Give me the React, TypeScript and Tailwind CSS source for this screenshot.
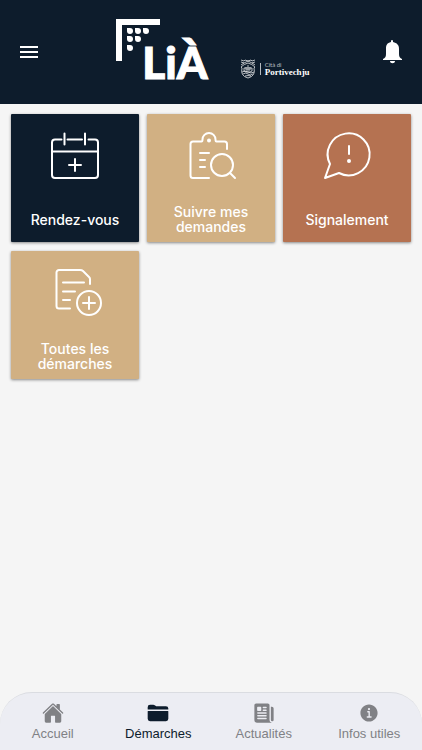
import React from "react";
import { IoHome, IoFolder, IoNewspaper, IoInformationCircle } from "react-icons/io5";

const line = {
  fill: "none",
  stroke: "currentColor",
  strokeWidth: 2,
  strokeLinecap: "round",
  strokeLinejoin: "round",
} as const;

function CalendarIcon() {
  return (
    <svg viewBox="0 0 48 48" className="size-12 overflow-visible" aria-hidden="true" {...line}>
      <path d="M10.5 7.5H4a3 3 0 0 0-3 3V43a3 3 0 0 0 3 3h40a3 3 0 0 0 3-3V10.5a3 3 0 0 0-3-3h-6.5M16.5 7.5H31M1 19.5h46M13.500 1.5v11M34 1.5v11M24 27v12M18 33h12" />
    </svg>
  );
}

function ClipboardIcon() {
  return (
    <svg viewBox="0 0 48 48" className="size-12 overflow-visible" aria-hidden="true" {...line}>
      <path d="M22 46H6a2.5 2.5 0 0 1-2.5-2.5V12A2.5 2.5 0 0 1 6 9.5h8.5c1 0 1-1 1-2a6.5 6.5 0 0 1 13 0c0 1 0 2 1 2h8A2.5 2.5 0 0 1 40 12v5M13 21h9M13 28h5M13 35h5" />
      <circle cx="22" cy="8.5" r="1" fill="currentColor" />
      <circle cx="35" cy="33" r="11" />
      <path d="m43 41 5 5" />
    </svg>
  );
}

function SpeechIcon() {
  return (
    <svg viewBox="0 0 48 48" className="size-12 overflow-visible" aria-hidden="true" {...line}>
      <path d="M7 32A21 21 0 1 1 16 41L2 46Z" />
      <path d="M26 14v8" />
      <circle cx="26" cy="29" r="1" fill="currentColor" />
    </svg>
  );
}

function DocumentIcon() {
  return (
    <svg viewBox="0 0 48 48" className="size-12 overflow-visible" aria-hidden="true" {...line}>
      <path d="M19 39.5H8A2.5 2.5 0 0 1 5.5 37V3.5A2.5 2.5 0 0 1 8 1h21c1 0 2 0 3 1l6 6c1 1 1 1 1 2v5M12 13.5h21M12 22.5h12M12 31h7" />
      <circle cx="38" cy="34" r="12" />
      <path d="M38 28v12M32 34h12" />
    </svg>
  );
}

function LogoMark() {
  return (
    <svg viewBox="0 0 44 44" className="h-11 w-11" fill="#fff" aria-hidden="true">
      <path d="M0 1h44v6H6v36H0z" />
      {[
        [14, 13],
        [22, 13],
        [30, 13],
        [14, 21],
        [22, 21],
        [14, 30],
      ].map(([x, y]) => (
        <path
          key={`${x}-${y}`}
          transform={`translate(${x} ${y})`}
          d="M-3-3H0A3 3 0 1 1-3 0z"
        />
      ))}
    </svg>
  );
}

function Crest() {
  return (
    <svg viewBox="0 0 16 20" className="h-5 w-4" fill="none" stroke="#fff" strokeWidth=".7" aria-hidden="true">
      <path d="M1 1l3 1 1-1 3 1 3-1 1 1 3-1M1 3l3 1 4-2 4 2 3-1M1 6l3-2M15 6l-3-2" />
      <path d="M1 8q3-3 7-4 4 1 7 4l-1 1q2 8-6 10Q0 17 2 9z" />
      <path d="M4 9h8v3l-2 1H6l-2-1zM2 13q3-2 6 0t6 0M3 15q3-2 5 0t5 0M5 17q3-1 6 0" />
      <path d="M6 8v3h4V8M8 6v5" />
    </svg>
  );
}

const tiles = [
  { label: "Rendez-vous", color: "bg-[#0d1c2c]", Icon: CalendarIcon },
  { label: "Suivre mes demandes", color: "bg-[#d1b083]", Icon: ClipboardIcon },
  { label: "Signalement", color: "bg-[#b57251]", Icon: SpeechIcon },
  { label: "Toutes les démarches", color: "bg-[#d1b083]", Icon: DocumentIcon },
];

const tabs = [
  { label: "Accueil", Icon: IoHome },
  { label: "Démarches", Icon: IoFolder, active: true },
  { label: "Actualités", Icon: IoNewspaper },
  { label: "Infos utiles", Icon: IoInformationCircle },
];

export default function App() {
  return (
    <div className="flex min-h-screen flex-col bg-[#f5f5f5] font-['Liberation_Sans',Arial,sans-serif]">
      <header className="flex h-26 items-center justify-between bg-[#0d1c2c] px-5 text-white">
        <button type="button" aria-label="Menu" className="flex w-5 justify-start">
          <svg viewBox="0 0 18 14" className="h-[14px] w-[18px]" fill="currentColor" aria-hidden="true">
            <path d="M0 1h18v2H0zM0 6h18v2H0zM0 11h18v2H0z" />
          </svg>
        </button>
        <div className="flex items-end gap-8 pl-1">
          <div className="grid">
            <div className="col-start-1 row-start-1 -mt-0.5">
              <LogoMark />
            </div>
            <span className="col-start-1 row-start-1 pt-5 pl-[26px] font-[Lato,sans-serif] text-[44px] leading-11 font-black [-webkit-text-stroke:1px_white]">
              LiÀ
            </span>
          </div>
          <div className="flex items-center gap-1 pb-[5px]">
            <Crest />
            <span className="h-3 w-px bg-white/70" />
            <div className="flex flex-col">
              <span className="font-[Lato,sans-serif] text-[6px] leading-[7px] text-white/70">Cità di</span>
              <span className="font-['Liberation_Serif',serif] text-[9px] leading-[9px] font-bold">Portivechju</span>
            </div>
          </div>
        </div>
        <button type="button" aria-label="Notifications">
          <svg viewBox="0 0 20 24" className="h-6 w-5" fill="currentColor" aria-hidden="true">
            <path d="M9 1a1 1 0 0 1 2 0v1c4 1 6 3 6 7v5c0 3 1 4 3 5v1H1v-1c2-1 3-2 3-5V9c0-4 1-6 5-7zM8 21h5c0 3-5 3-5 0z" />
          </svg>
        </button>
      </header>

      <main className="flex-1 px-[11px] pt-[10px]">
        <div className="grid grid-cols-3 gap-x-2 gap-y-[9px]">
          {tiles.map(({ label, color, Icon }) => (
            <button
              key={label}
              type="button"
              className={`flex aspect-square flex-col items-center rounded-[1px] pt-[18px] text-white shadow-[0_1px_3px_rgba(0,0,0,0.45)] ${color}`}
            >
              <Icon />
              <span className="mt-4 flex h-[46px] items-center px-4 text-center font-[Inter,'Liberation_Sans',sans-serif] text-[14px] leading-[15px] font-medium">
                {label}
              </span>
            </button>
          ))}
        </div>
      </main>

      <nav className="grid h-[58px] grid-cols-4 rounded-t-[32px] border-t border-[#dadce1] bg-[#ecedf3]">
        {tabs.map(({ label, Icon, active }) => (
          <a
            key={label}
            href="#"
            aria-current={active ? "page" : undefined}
            className={`flex flex-col items-center gap-px pt-[9px] text-[13px] leading-[17px] ${active ? "text-[#0d1c2c]" : "text-[#808185]"}`}
          >
            <Icon className="size-[22px]" aria-hidden="true" />
            {label}
          </a>
        ))}
      </nav>
    </div>
  );
}
